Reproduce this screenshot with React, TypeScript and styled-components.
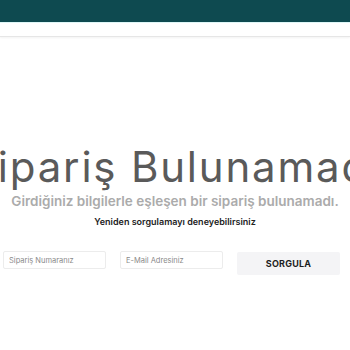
import styled, { createGlobalStyle } from "styled-components";

const GlobalStyle = createGlobalStyle`
  html, body {
    margin: 0;
    padding: 0;
    background: #ffffff;
    font-family: "Inter", "Noto Sans", sans-serif;
    overflow: hidden;
  }
`;

const Page = styled.div`
  width: 350px;
  height: 350px;
  overflow: hidden;
  display: flex;
  flex-direction: column;
`;

const TopBar = styled.div`
  height: 22px;
  background: #0e4a50;
  border-bottom: 1px solid #dff7f7;
`;

const NavBar = styled.div`
  height: 13px;
  background: #ffffff;
  border-bottom: 1px solid #e6e6e6;
  box-shadow: 0 1px 2px rgba(0, 0, 0, 0.05);
`;

const Content = styled.main`
  display: flex;
  flex-direction: column;
  align-items: center;
  padding-top: 106px;
`;

const Title = styled.h1`
  margin: 0;
  font-size: 42px;
  font-weight: 400;
  line-height: 48px;
  color: #5a5a5a;
  white-space: nowrap;
  letter-spacing: 1.8px;
`;

const Subtitle = styled.p`
  margin: 0;
  font-size: 13.5px;
  font-weight: 600;
  line-height: 20px;
  color: #ababab;
  white-space: nowrap;
`;

const Hint = styled.p`
  margin: 0;
  margin-top: 4px;
  font-size: 9px;
  font-weight: 600;
  line-height: 14px;
  color: #222222;
`;

const Form = styled.form`
  align-self: stretch;
  display: grid;
  grid-template-columns: repeat(3, 1fr);
  gap: 14px;
  padding: 0 10px 0 3px;
  margin-top: 21px;
  align-items: start;
`;

const Input = styled.input`
  box-sizing: border-box;
  width: 100%;
  height: 18px;
  margin-top: 1px;
  border: 1px solid #ececec;
  border-radius: 2px;
  padding: 0 5px;
  font-family: inherit;
  font-size: 7.5px;
  color: #333;
  outline: none;
  &::placeholder {
    color: #8a8a8a;
  }
`;

const Button = styled.button`
  box-sizing: border-box;
  width: 100%;
  height: 23px;
  margin-top: 2px;
  border: none;
  border-radius: 2px;
  background: #f4f4f6;
  font-family: inherit;
  font-size: 9px;
  font-weight: 700;
  color: #1e1e1e;
  letter-spacing: 0.2px;
`;

export default function App() {
  return (
    <Page>
      <GlobalStyle />
      <TopBar />
      <NavBar />
      <Content>
        <Title>Sipariş Bulunamadı</Title>
        <Subtitle>Girdiğiniz bilgilerle eşleşen bir sipariş bulunamadı.</Subtitle>
        <Hint>Yeniden sorgulamayı deneyebilirsiniz</Hint>
        <Form onSubmit={(e) => e.preventDefault()}>
          <Input placeholder="Sipariş Numaranız" />
          <Input placeholder="E-Mail Adresiniz" />
          <Button type="submit">SORGULA</Button>
        </Form>
      </Content>
    </Page>
  );
}
